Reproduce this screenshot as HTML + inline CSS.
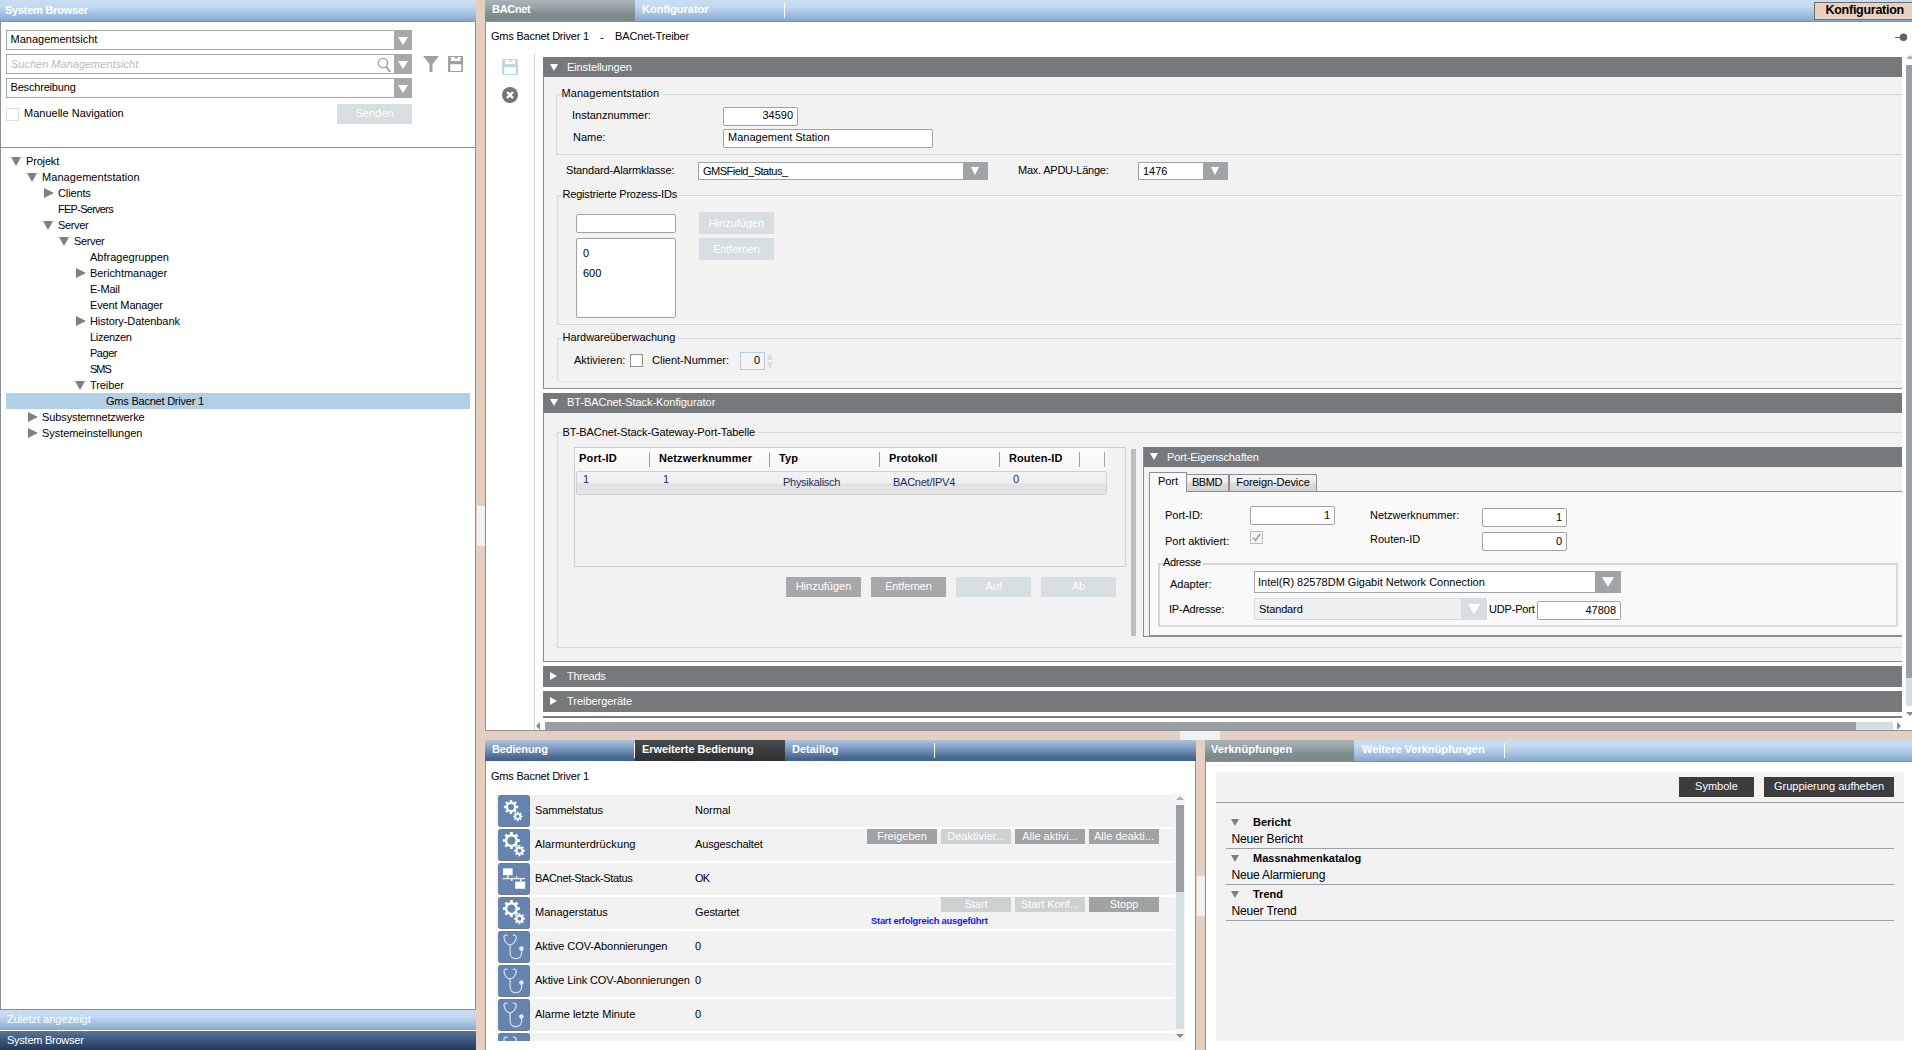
<!DOCTYPE html>
<html lang="de">
<head>
<meta charset="utf-8">
<title>System Browser - BACnet Konfigurator</title>
<style>
*{box-sizing:border-box;margin:0;padding:0}
html,body{width:1912px;height:1050px;overflow:hidden}
body{position:relative;background:#e5cfc0;font-family:"Liberation Sans",Arial,sans-serif;font-size:11px;color:#000;line-height:16px}
.a{position:absolute}
.t{position:absolute;white-space:nowrap;height:16px;line-height:16px}
.b{font-weight:bold}
.w{color:#fff}
.hb{background:linear-gradient(#c9ddf2 0%,#c4daf0 30%,#a3c1e2 68%,#86a7cd 100%)}
.hd{background:linear-gradient(#adc3dd 0%,#94aece 22%,#6e8db5 52%,#4b6b95 82%,#40608b 100%)}
.tabg{background:linear-gradient(#a8b4b8 0%,#98a4a7 35%,#808d8e 65%,#7b8889 100%)}
.tabd{background:linear-gradient(#4a4e50 0%,#3a3e40 50%,#2c3032 100%)}
.sec{position:absolute;background:#75797c;height:20px;color:#fff}
.sec>span{position:absolute;left:24px;top:1px;line-height:16px;white-space:nowrap}
.tri-d{position:absolute;width:0;height:0;border-left:4.2px solid transparent;border-right:4.2px solid transparent;border-top:7.5px solid #fff;margin-top:-1px;margin-left:0.5px}
.tri-r{position:absolute;width:0;height:0;border-top:4px solid transparent;border-bottom:4px solid transparent;border-left:7px solid #fff}
.inp{position:absolute;background:#fff;border:1px solid #a3a3a3;border-radius:2px;height:19px;line-height:17px;white-space:nowrap;padding:0 4px}
.r{text-align:right}
.dd{position:absolute;background:#fff;border:1px solid #a3a3a3;line-height:16px;white-space:nowrap;padding:0 4px}
.dd i{position:absolute;right:-1px;top:-1px;bottom:-1px;background:#9fa4a7;display:block}
.dd i:after{content:"";position:absolute;left:50%;top:50%;margin:-3px 0 0 -5px;border-left:5px solid transparent;border-right:5px solid transparent;border-top:8px solid #fff}
.dd.s i:after{margin:-4px 0 0 -4.5px;border-left-width:4.5px;border-right-width:4.5px}
.dd.l i:after{margin:-5px 0 0 -6px;border-left-width:6px;border-right-width:6px;border-top-width:10px}
.btn{position:absolute;background:#a6a8a9;color:#fff;text-align:center;white-space:nowrap;overflow:hidden}
.dis{background:#d6dee1;color:#fff}
.dk{background:#3c3c3c}
.gl{position:absolute;background:#d9d9d9}
.gt{position:absolute;white-space:nowrap;line-height:16px;height:16px;background:#f2f2f2;padding:0 3px 0 0.5px;margin-left:5px}
.tr{position:absolute;left:0;width:470px;height:16px;line-height:16px;white-space:nowrap}
.tr u{position:absolute;top:4px;width:0;height:0;text-decoration:none}
.tr u.d{border-left:5.5px solid transparent;border-right:5.5px solid transparent;border-top:9px solid #808080;margin-left:1px}
.tr u.e{border-top:5.5px solid transparent;border-bottom:5.5px solid transparent;border-left:10px solid #808080;top:3px;margin-left:0.5px}
.row{position:absolute;left:497px;width:677px;height:32px;background:#f2f2f2}
.ic{position:absolute;left:1px;top:0;width:32px;height:32px;background:#6585b0;border-radius:3px;border:1px solid #747880;border-left-color:#6a83a6}
.ic svg{position:absolute;left:-1px;top:-1px}
.row .l{position:absolute;left:38px;top:7px;line-height:16px;white-space:nowrap}
.row .v{position:absolute;left:198px;top:7px;line-height:16px;white-space:nowrap}
.sb{position:absolute;height:15px;line-height:15px;width:70px;font-size:11px;background:#9fa3a4}
.sb.dis{background:#ccd1d2}
.col{position:absolute;top:2px;font-weight:bold;line-height:16px;white-space:nowrap}
.cs{position:absolute;top:4px;width:1px;height:15px;background:#a0a0a0}
.cell{position:absolute;color:#1c2b6b;line-height:16px;white-space:nowrap}
</style>
</head>
<body>
<!-- LEFT: System Browser -->
<div class="a hb" style="left:0;top:0;width:476px;height:21px"></div>
<div class="a" style="left:0;top:21px;width:476px;height:1px;background:#8a8e96"></div>
<div class="t b w" style="left:5px;top:2px;font-size:11px"><span class="k" style="letter-spacing:-0.25px">System Browser</span></div>
<div class="a" style="left:0;top:22px;width:476px;height:988px;background:#fff;border-left:1px solid #8a8e96;border-right:1px solid #8a8e96;border-bottom:1px solid #8a8e96"></div>
<div class="dd" style="left:6px;top:30px;width:406px;height:20px;padding-left:3.5px">Managementsicht<i style="width:18px;background:#a9a9a9"></i></div>
<div class="dd" style="left:6px;top:54px;width:406px;height:20px;padding-top:1px;color:#b9b9b9;font-style:italic">Suchen Managementsicht<i style="width:18px;background:#a9a9a9"></i>
<svg class="a" style="left:369px;top:1px" width="16" height="16" viewBox="0 0 16 16"><circle cx="7" cy="7" r="4.6" fill="none" stroke="#a0a0a0" stroke-width="1.4"/><path d="M10 10.6 L14.4 16" stroke="#a0a0a0" stroke-width="1.9" fill="none"/></svg>
</div>
<div class="dd" style="left:6px;top:78px;width:406px;height:20px;padding-left:3.5px"><span class="k" style="letter-spacing:-0.183px">Beschreibung</span><i style="width:18px;background:#a9a9a9"></i></div>
<svg class="a" style="left:423px;top:56px" width="16" height="16" viewBox="0 0 16 16"><path d="M0 0 H16 L9.5 8 V16 H6.5 V8 Z" fill="#a0a0a0"/></svg>
<svg class="a" style="left:447.5px;top:56px" width="15.5" height="16" preserveAspectRatio="none" viewBox="0 0 16 16"><path d="M0 0 H16 V16 H0 Z M3 1 V5 H13 V1 H9.8 V2.6 H7 V1 Z M2.3 8.3 V15 H13.7 V8.3 Z" fill="#a0a0a0" fill-rule="evenodd"/></svg>
<div class="a" style="left:6px;top:108px;width:13px;height:13px;background:#fff;border:1px solid #d9dde6"></div>
<div class="t" style="left:24px;top:105px">Manuelle Navigation</div>
<div class="btn dis" style="left:337px;top:104px;width:75px;height:20px;line-height:19px">Senden</div>
<div class="a" style="left:1px;top:147px;width:474px;height:1px;background:#8a8e96"></div>
<div class="tr" style="top:153px"><u class="d" style="left:10px"></u><span class="a" style="left:26px"><span class="k" style="letter-spacing:-0.171px">Projekt</span></span></div>
<div class="tr" style="top:169px"><u class="d" style="left:26px"></u><span class="a" style="left:42px"><span class="k" style="letter-spacing:0.065px">Managementstation</span></span></div>
<div class="tr" style="top:185px"><u class="e" style="left:43px"></u><span class="a" style="left:58px"><span class="k" style="letter-spacing:-0.129px">Clients</span></span></div>
<div class="tr" style="top:201px"><span class="a" style="left:58px"><span class="k" style="letter-spacing:-0.727px">FEP-Servers</span></span></div>
<div class="tr" style="top:217px"><u class="d" style="left:42px"></u><span class="a" style="left:58px"><span class="k" style="letter-spacing:-0.333px">Server</span></span></div>
<div class="tr" style="top:233px"><u class="d" style="left:58px"></u><span class="a" style="left:74px"><span class="k" style="letter-spacing:-0.333px">Server</span></span></div>
<div class="tr" style="top:249px"><span class="a" style="left:90px">Abfragegruppen</span></div>
<div class="tr" style="top:265px"><u class="e" style="left:75px"></u><span class="a" style="left:90px"><span class="k" style="letter-spacing:-0.043px">Berichtmanager</span></span></div>
<div class="tr" style="top:281px"><span class="a" style="left:90px"><span class="k" style="letter-spacing:-0.25px">E-Mail</span></span></div>
<div class="tr" style="top:297px"><span class="a" style="left:90px"><span class="k" style="letter-spacing:-0.138px">Event Manager</span></span></div>
<div class="tr" style="top:313px"><u class="e" style="left:75px"></u><span class="a" style="left:90px"><span class="k" style="letter-spacing:-0.071px">History-Datenbank</span></span></div>
<div class="tr" style="top:329px"><span class="a" style="left:90px"><span class="k" style="letter-spacing:-0.3px">Lizenzen</span></span></div>
<div class="tr" style="top:345px"><span class="a" style="left:90px"><span class="k" style="letter-spacing:-0.48px">Pager</span></span></div>
<div class="tr" style="top:361px"><span class="a" style="left:90px"><span class="k" style="letter-spacing:-1.0px">SMS</span></span></div>
<div class="tr" style="top:377px"><u class="d" style="left:74px"></u><span class="a" style="left:90px"><span class="k" style="letter-spacing:-0.086px">Treiber</span></span></div>
<div class="tr" style="top:393px;left:6px;width:464px;background:#b2cfe6"><span class="a" style="left:100px"><span class="k" style="letter-spacing:-0.221px">Gms Bacnet Driver 1</span></span></div>
<div class="tr" style="top:409px"><u class="e" style="left:27px"></u><span class="a" style="left:42px"><span class="k" style="letter-spacing:-0.111px">Subsystemnetzwerke</span></span></div>
<div class="tr" style="top:425px"><u class="e" style="left:27px"></u><span class="a" style="left:42px"><span class="k" style="letter-spacing:-0.063px">Systemeinstellungen</span></span></div>
<div class="a hb" style="left:0;top:1010px;width:476px;height:20px"></div>
<div class="t w" style="left:7px;top:1011px">Zuletzt angezeigt</div>
<div class="a" style="left:0;top:1030px;width:476px;height:1px;background:#fff"></div>
<div class="a" style="left:0;top:1031px;width:476px;height:19px;background:linear-gradient(#5b7599 0%,#3f5b82 40%,#22395a 100%)"></div>
<div class="t w" style="left:7px;top:1032px"><span class="k" style="letter-spacing:-0.25px">System Browser</span></div>
<!-- splitter grips -->
<div class="a" style="left:477px;top:506px;width:8px;height:40px;background:#f2f2f2"></div>
<!-- TOP RIGHT: BACnet Konfigurator -->
<div class="a" style="left:485px;top:0;width:1427px;height:730px;background:#fff;border-left:1px solid #8a8e96"></div>
<div class="a hb" style="left:485px;top:0;width:1427px;height:21px"></div>
<div class="a" style="left:485px;top:21px;width:1427px;height:1px;background:#8a8e96"></div>
<div class="a tabg" style="left:485px;top:0;width:150px;height:21px"></div>
<div class="t b w" style="left:492px;top:1px"><span class="k" style="letter-spacing:-0.317px">BACnet</span></div>
<div class="t b w" style="left:642px;top:1px">Konfigurator</div>
<div class="a" style="left:784px;top:3px;width:1px;height:15px;background:#fff"></div>
<div class="a" style="left:1814px;top:2px;width:99px;height:18px;background:#e8d1c1;border:1px solid #6e6e6e"></div>
<div class="t b" style="left:1825.5px;top:2px;line-height:17px;font-size:12.5px"><span class="k" style="letter-spacing:-0.269px">Konfiguration</span></div>
<div class="t" style="left:491px;top:28px"><span class="k" style="letter-spacing:-0.221px">Gms Bacnet Driver 1</span></div>
<div class="t" style="left:600px;top:29px">-</div>
<div class="t" style="left:615px;top:28px"><span class="k" style="letter-spacing:-0.143px">BACnet-Treiber</span></div>
<svg class="a" style="left:1894px;top:32px" width="14" height="10" viewBox="0 0 14 10"><path d="M1 5.5 H6" stroke="#666" stroke-width="1"/><circle cx="9.5" cy="5.3" r="3.8" fill="#5f6366"/></svg>
<!-- toolbar -->
<div class="a" style="left:534px;top:53px;width:1px;height:677px;background:#d4d4d4"></div>
<svg class="a" style="left:502px;top:59px" width="16" height="16" viewBox="0 0 16 16"><path d="M0 0 H16 V16 H0 Z M3 1 V5 H13 V1 H9.8 V2.6 H7 V1 Z M2.3 8.3 V15 H13.7 V8.3 Z" fill="#bdd9e2" fill-rule="evenodd"/></svg>
<svg class="a" style="left:502px;top:87px" width="16" height="16" viewBox="0 0 16 16"><circle cx="8" cy="8" r="8" fill="#757575"/><path d="M5 5 L11 11 M11 5 L5 11" stroke="#fff" stroke-width="2.4"/></svg>
<!-- Section 1: Einstellungen -->
<div class="a" style="left:543px;top:77px;width:1359px;height:312px;background:#f2f2f2;border-left:1px solid #8a8d90;border-bottom:1px solid #8a8d90"></div>
<div class="sec" style="left:543px;top:57px;width:1359px"><div class="tri-d" style="left:6px;top:8px"></div><span style="top:2px"><span class="k" style="letter-spacing:-0.108px">Einstellungen</span></span></div>
<!-- group Managementstation -->
<div class="gl" style="left:556px;top:94px;width:1346px;height:1px"></div>
<div class="gl" style="left:556px;top:94px;width:1px;height:61px"></div>
<div class="gl" style="left:556px;top:154px;width:1346px;height:1px"></div>
<div class="gt" style="left:556px;top:85px"><span class="k" style="letter-spacing:0.065px">Managementstation</span></div>
<div class="t" style="left:572px;top:107px">Instanznummer:</div>
<div class="inp r" style="left:723px;top:107px;width:75px;line-height:15px">34590</div>
<div class="t" style="left:573px;top:129px">Name:</div>
<div class="inp" style="left:723px;top:129px;width:210px;line-height:15px">Management Station</div>
<div class="t" style="left:566px;top:162px"><span class="k" style="letter-spacing:-0.143px">Standard-Alarmklasse:</span></div>
<div class="dd s" style="left:698px;top:162px;width:290px;height:18px"><span class="k" style="letter-spacing:-0.487px">GMSField_Status_</span><i style="width:25px"></i></div>
<div class="t" style="left:1018px;top:162px"><span class="k" style="letter-spacing:-0.225px">Max. APDU-Länge:</span></div>
<div class="dd s" style="left:1138px;top:162px;width:90px;height:18px">1476<i style="width:25px"></i></div>
<!-- group Registrierte Prozess-IDs -->
<div class="gl" style="left:557px;top:195px;width:1345px;height:1px"></div>
<div class="gl" style="left:557px;top:195px;width:1px;height:130px"></div>
<div class="gl" style="left:557px;top:324px;width:1345px;height:1px"></div>
<div class="gt" style="left:557px;top:186px"><span class="k" style="letter-spacing:-0.196px">Registrierte Prozess-IDs</span></div>
<div class="inp" style="left:576px;top:214px;width:100px"></div>
<div class="inp" style="left:576px;top:238px;width:100px;height:80px"></div>
<div class="t" style="left:583px;top:245px">0</div>
<div class="t" style="left:583px;top:265px">600</div>
<div class="btn dis" style="left:699px;top:212px;width:75px;height:22px;line-height:22px">Hinzufügen</div>
<div class="btn dis" style="left:699px;top:238px;width:75px;height:22px;line-height:22px"><span class="k" style="letter-spacing:-0.111px">Entfernen</span></div>
<!-- group Hardwareüberwachung -->
<div class="gl" style="left:557px;top:338px;width:1345px;height:1px"></div>
<div class="gl" style="left:557px;top:338px;width:1px;height:44px"></div>
<div class="gl" style="left:557px;top:381px;width:1345px;height:1px;background:#e4e4e4"></div>
<div class="gt" style="left:557px;top:329px"><span class="k" style="letter-spacing:-0.053px">Hardwareüberwachung</span></div>
<div class="t" style="left:574px;top:352px">Aktivieren:</div>
<div class="a" style="left:630px;top:354px;width:13px;height:13px;background:#fff;border:1px solid #8f8f8f"></div>
<div class="t" style="left:652px;top:352px">Client-Nummer:</div>
<div class="a r" style="left:740px;top:352px;width:25px;height:18px;background:#f4f4f4;border:1px solid #b4cfe4;padding-right:4px;line-height:15px">0</div>
<div class="a" style="left:767px;top:353px;width:0;height:0;border-left:3.5px solid transparent;border-right:3.5px solid transparent;border-bottom:7.5px solid #d6dee1"></div>
<div class="a" style="left:767px;top:362px;width:0;height:0;border-left:3.5px solid transparent;border-right:3.5px solid transparent;border-top:7.5px solid #d6dee1"></div>
<!-- Section 2: BT-BACnet-Stack-Konfigurator -->
<div class="a" style="left:543px;top:413px;width:1359px;height:249px;background:#f2f2f2;border-left:1px solid #8a8d90;border-bottom:1px solid #8a8d90"></div>
<div class="sec" style="left:543px;top:393px;width:1359px"><div class="tri-d" style="left:6px;top:7px"></div><span><span class="k" style="letter-spacing:-0.054px">BT-BACnet-Stack-Konfigurator</span></span></div>
<div class="gl" style="left:557px;top:432px;width:1345px;height:1px"></div>
<div class="gl" style="left:557px;top:432px;width:1px;height:216px"></div>
<div class="gl" style="left:557px;top:647px;width:1345px;height:1px"></div>
<div class="gt" style="left:557px;top:424px"><span class="k" style="letter-spacing:-0.086px">BT-BACnet-Stack-Gateway-Port-Tabelle</span></div>
<!-- table -->
<div class="a" style="left:574px;top:447px;width:552px;height:120px;border:1px solid #d0d0d0;background:#f2f2f2">
 <div class="a" style="left:0;top:0;width:532px;height:23px;background:linear-gradient(#fdfdfd,#f6f6f6)"></div>
 <div class="col" style="left:4px"><span class="k" style="letter-spacing:0.171px">Port-ID</span></div><div class="cs" style="left:74px"></div>
 <div class="col" style="left:84px"><span class="k" style="letter-spacing:0.107px">Netzwerknummer</span></div><div class="cs" style="left:194px"></div>
 <div class="col" style="left:204px"><span class="k" style="letter-spacing:0.167px">Typ</span></div><div class="cs" style="left:304px"></div>
 <div class="col" style="left:314px"><span class="k" style="letter-spacing:0.067px">Protokoll</span></div><div class="cs" style="left:424px"></div>
 <div class="col" style="left:434px"><span class="k" style="letter-spacing:0.1px">Routen-ID</span></div><div class="cs" style="left:504px"></div><div class="cs" style="left:529px"></div>
 <div class="a" style="left:1px;top:23px;width:531px;height:24px;border:1px solid #cfcfcf;border-radius:2px;background:linear-gradient(#f3f3f3 0%,#eeeeee 50%,#e2e2e2 55%,#e6e6e6 100%)"></div>
 <div class="cell" style="left:8px;top:23px">1</div>
 <div class="cell" style="left:88px;top:23px">1</div>
 <div class="cell" style="left:208px;top:26px"><span class="k" style="letter-spacing:-0.283px">Physikalisch</span></div>
 <div class="cell" style="left:318px;top:26px"><span class="k" style="letter-spacing:-0.255px">BACnet/IPV4</span></div>
 <div class="cell" style="left:438px;top:23px">0</div>
</div>
<div class="btn" style="left:786px;top:577px;width:75px;height:20px;line-height:19px">Hinzufügen</div>
<div class="btn" style="left:871px;top:577px;width:75px;height:20px;line-height:19px"><span class="k" style="letter-spacing:-0.111px">Entfernen</span></div>
<div class="btn dis" style="left:956px;top:577px;width:75px;height:20px;line-height:19px">Auf</div>
<div class="btn dis" style="left:1041px;top:577px;width:75px;height:20px;line-height:19px">Ab</div>
<div class="a" style="left:1131px;top:449px;width:5px;height:187px;background:#bebebe"></div>
<!-- Port-Eigenschaften -->
<div class="a" style="left:1143px;top:447px;width:759px;height:190px;background:#f2f2f2;border-left:1px solid #8a8d90;border-bottom:1px solid #8a8d90"></div>
<div class="sec" style="left:1144px;top:447px;width:758px;height:20px"><div class="tri-d" style="left:5px;top:7px"></div><span style="left:23px;top:2px"><span class="k" style="letter-spacing:-0.094px">Port-Eigenschaften</span></span></div>
<div class="a" style="left:1149px;top:491px;width:753px;height:145px;background:#f9f9f9;border:1px solid #8c8e91;border-right:none"></div>
<div class="a" style="left:1186px;top:474px;width:43px;height:18px;padding-right:1px;border:1px solid #8c8e91;background:linear-gradient(#f5f5f5 0%,#ededed 45%,#dcdcdc 55%,#d2d2d2 100%);text-align:center;line-height:15px"><span class="k" style="letter-spacing:-0.4px">BBMD</span></div>
<div class="a" style="left:1229px;top:474px;width:88px;height:18px;border:1px solid #8c8e91;background:linear-gradient(#f5f5f5 0%,#ededed 45%,#dcdcdc 55%,#d2d2d2 100%);text-align:center;line-height:15px"><span class="k" style="letter-spacing:-0.086px">Foreign-Device</span></div>
<div class="a" style="left:1149px;top:472px;width:38px;height:20px;border:1px solid #8c8e91;border-bottom:none;background:#f9f9f9;text-align:center;line-height:17px">Port</div>
<div class="t" style="left:1165px;top:507px">Port-ID:</div>
<div class="inp r" style="left:1250px;top:506px;width:85px">1</div>
<div class="t" style="left:1370px;top:507px">Netzwerknummer:</div>
<div class="inp r" style="left:1482px;top:508px;width:85px">1</div>
<div class="t" style="left:1165px;top:533px">Port aktiviert:</div>
<div class="a" style="left:1250px;top:531px;width:13px;height:13px;background:#f4f4f4;border:1px solid #bcbcbc"></div>
<svg class="a" style="left:1250px;top:531px" width="13" height="13" viewBox="0 0 13 13"><path d="M3 6.5 L5.5 9.5 L10 3" stroke="#a0a0a0" stroke-width="1.6" fill="none"/></svg>
<div class="t" style="left:1370px;top:531px">Routen-ID </div>
<div class="inp r" style="left:1482px;top:532px;width:85px">0</div>
<!-- Adresse group -->
<div class="a" style="left:1158px;top:563px;width:740px;height:64px;border:2px solid #dcdcdc;border-top-color:#d6d6d6;border-left-color:#d6d6d6"></div>
<div class="gt" style="left:1158px;top:554px;padding:0 2px 0 0;background:#f9f9f9"><span class="k" style="letter-spacing:-0.357px">Adresse</span></div>
<div class="t" style="left:1170px;top:576px">Adapter:</div>
<div class="dd l" style="left:1254px;top:571px;width:367px;height:22px;padding-top:2px;padding-left:3px">Intel(R) 82578DM Gigabit Network Connection<i style="width:26px"></i></div>
<div class="t" style="left:1169px;top:601px"><span class="k" style="letter-spacing:-0.227px">IP-Adresse:</span></div>
<div class="dd l" style="left:1254px;top:598px;width:233px;height:22px;padding-top:2px;background:#eef0f1;border-color:#d6dee1"><span class="k" style="letter-spacing:-0.125px">Standard</span><i style="width:26px;background:#d6dee1"></i></div>
<div class="t" style="left:1489px;top:601px"><span class="k" style="letter-spacing:-0.188px">UDP-Port</span></div>
<div class="inp r" style="left:1537px;top:601px;width:84px">47808</div>
<!-- Sections 3,4 -->
<div class="sec" style="left:543px;top:666px;width:1359px;height:21px"><div class="tri-r" style="left:7px;top:6px"></div><span style="top:2px"><span class="k" style="letter-spacing:-0.257px">Threads</span></span></div>
<div class="sec" style="left:543px;top:691px;width:1359px;height:21px"><div class="tri-r" style="left:7px;top:6px"></div><span style="top:2px"><span class="k" style="letter-spacing:-0.038px">Treibergeräte</span></span></div>
<div class="a" style="left:543px;top:716px;width:1359px;height:2px;background:#7b7e81"></div>
<!-- scrollbars -->
<div class="a" style="left:1906px;top:65px;width:6px;height:613px;background:#9a9fa3"></div>
<div class="a" style="left:1906px;top:678px;width:6px;height:28px;background:#d6dee1"></div>
<div class="a" style="left:1906px;top:55px;width:0;height:0;border-left:4px solid transparent;border-right:4px solid transparent;border-bottom:4px solid #b0b4b6"></div>
<div class="a" style="left:1906px;top:712px;width:0;height:0;border-left:4px solid transparent;border-right:4px solid transparent;border-top:4px solid #8a8d90"></div>
<div class="a" style="left:545px;top:722px;width:1311px;height:8px;background:#9a9fa3"></div>
<div class="a" style="left:1856px;top:722px;width:37px;height:8px;background:#d6dee1"></div>
<div class="a" style="left:536px;top:722px;width:0;height:0;border-top:4px solid transparent;border-bottom:4px solid transparent;border-right:4px solid #8a8d90"></div>
<div class="a" style="left:1897px;top:722px;width:0;height:0;border-top:4px solid transparent;border-bottom:4px solid transparent;border-left:4px solid #8a8d90"></div>
<div class="a" style="left:485px;top:730px;width:1427px;height:1px;background:#8e9297"></div>
<div class="a" style="left:1180px;top:731px;width:40px;height:9px;background:#f2f2f2"></div>
<!-- BOTTOM LEFT: Bedienung -->
<div class="a" style="left:485px;top:740px;width:711px;height:310px;background:#fff;border-left:1px solid #8a8e96;border-right:1px solid #8a8e96"></div>
<div class="a hd" style="left:485px;top:740px;width:711px;height:21px"></div>
<div class="a tabd" style="left:635px;top:740px;width:150px;height:21px"></div>
<div class="a" style="left:634px;top:743px;width:1px;height:15px;background:#fff"></div>
<div class="a" style="left:934px;top:743px;width:1px;height:15px;background:#fff"></div>
<div class="t b w" style="left:492px;top:741px"><span class="k" style="letter-spacing:-0.122px">Bedienung</span></div>
<div class="t b w" style="left:642px;top:741px"><span class="k" style="letter-spacing:-0.075px">Erweiterte Bedienung</span></div>
<div class="t b w" style="left:792px;top:741px">Detaillog</div>
<div class="t" style="left:491px;top:768px"><span class="k" style="letter-spacing:-0.221px">Gms Bacnet Driver 1</span></div>
<div class="a" style="left:497px;top:793px;width:688px;height:248px;background:#f4f4f4"></div>
<div class="a" style="left:497px;top:793px;width:677px;height:248px;background:#fff"></div>
<div class="a" style="left:496px;top:793px;width:1px;height:248px;background:#f4f4f4"></div>
<div class="row" style="top:795px"><div class="ic"><svg width="32" height="32" viewBox="0 0 32 32"><use href="#gears"/></svg></div><span class="l"><span class="k" style="letter-spacing:-0.158px">Sammelstatus</span></span><span class="v">Normal</span></div>
<div class="row" style="top:829px"><div class="ic"><svg width="32" height="32" viewBox="0 0 32 32"><use href="#gearl"/></svg></div><span class="l"><span class="k" style="letter-spacing:0.083px">Alarmunterdrückung</span></span><span class="v"><span class="k" style="letter-spacing:-0.115px">Ausgeschaltet</span></span></div>
<div class="row" style="top:863px"><div class="ic"><svg width="32" height="32" viewBox="0 0 32 32"><use href="#net"/></svg></div><span class="l"><span class="k" style="letter-spacing:-0.337px">BACnet-Stack-Status</span></span><span class="v"><span class="k" style="letter-spacing:-0.75px">OK</span></span></div>
<div class="row" style="top:897px"><div class="ic"><svg width="32" height="32" viewBox="0 0 32 32"><use href="#gearl"/></svg></div><span class="l">Managerstatus</span><span class="v"><span class="k" style="letter-spacing:-0.111px">Gestartet</span></span></div>
<div class="row" style="top:931px"><div class="ic"><svg width="32" height="32" viewBox="0 0 32 32"><use href="#steth"/></svg></div><span class="l"><span class="k" style="letter-spacing:-0.096px">Aktive COV-Abonnierungen</span></span><span class="v">0</span></div>
<div class="row" style="top:965px"><div class="ic"><svg width="32" height="32" viewBox="0 0 32 32"><use href="#steth"/></svg></div><span class="l"><span class="k" style="letter-spacing:-0.103px">Aktive Link COV-Abonnierungen</span></span><span class="v">0</span></div>
<div class="row" style="top:999px"><div class="ic"><svg width="32" height="32" viewBox="0 0 32 32"><use href="#steth"/></svg></div><span class="l">Alarme letzte Minute</span><span class="v">0</span></div>
<div class="row" style="top:1033px;height:8px;overflow:hidden"><div class="ic"><svg width="32" height="32" viewBox="0 0 32 32"><use href="#steth"/></svg></div></div>
<div class="btn sb" style="left:867px;top:829px">Freigeben</div>
<div class="btn sb dis" style="left:941px;top:829px">Deaktivier...</div>
<div class="btn sb" style="left:1015px;top:829px">Alle aktivi...</div>
<div class="btn sb" style="left:1089px;top:829px">Alle deakti...</div>
<div class="btn sb dis" style="left:941px;top:897px">Start</div>
<div class="btn sb dis" style="left:1015px;top:897px">Start Konf...</div>
<div class="btn sb" style="left:1089px;top:897px">Stopp</div>
<div class="t" style="left:871px;top:913px;font-size:9.3px;font-weight:bold;letter-spacing:-0.21px;color:#1414f5">Start erfolgreich ausgeführt</div>
<div class="a" style="left:1176px;top:805px;width:8px;height:224px;background:#d6dee1"></div>
<div class="a" style="left:1176px;top:805px;width:8px;height:87px;background:#9a9fa3"></div>
<div class="a" style="left:1176px;top:796px;width:0;height:0;border-left:4px solid transparent;border-right:4px solid transparent;border-bottom:4px solid #b0b4b6"></div>
<div class="a" style="left:1176px;top:1034px;width:0;height:0;border-left:4px solid transparent;border-right:4px solid transparent;border-top:4px solid #8a8d90"></div>
<div class="a" style="left:1197px;top:876px;width:8px;height:40px;background:#f2f2f2"></div>
<!-- BOTTOM RIGHT: Verknüpfungen -->
<div class="a" style="left:1205px;top:740px;width:707px;height:310px;background:#fff;border-left:1px solid #8a8e96"></div>
<div class="a hb" style="left:1205px;top:740px;width:707px;height:21px"></div>
<div class="a" style="left:1205px;top:761px;width:707px;height:1px;background:#8a8e96"></div>
<div class="a tabg" style="left:1205px;top:740px;width:149px;height:21px"></div>
<div class="a" style="left:1504px;top:743px;width:1px;height:15px;background:#fff"></div>
<div class="t b w" style="left:1211px;top:741px"><span class="k" style="letter-spacing:0.092px">Verknüpfungen</span></div>
<div class="t b w" style="left:1362px;top:741px">Weitere Verknüpfungen</div>
<div class="a" style="left:1216px;top:772px;width:688px;height:269px;background:#f2f2f2"></div>
<div class="btn dk" style="left:1679px;top:777px;width:75px;height:20px;line-height:19px">Symbole</div>
<div class="btn dk" style="left:1764px;top:777px;width:130px;height:20px;line-height:19px">Gruppierung aufheben</div>
<div class="a" style="left:1216px;top:802px;width:688px;height:1px;background:#9aa3a3"></div>
<div class="a" style="left:1231px;top:819px;width:0;height:0;border-left:4.5px solid transparent;border-right:4.5px solid transparent;border-top:7px solid #808080"></div>
<div class="t b" style="left:1253px;top:814px">Bericht</div>
<div class="t" style="left:1231.5px;top:831px;font-size:12px;letter-spacing:-0.15px">Neuer Bericht</div>
<div class="a" style="left:1226px;top:848px;width:668px;height:1px;background:#9aa3a3"></div>
<div class="a" style="left:1231px;top:855px;width:0;height:0;border-left:4.5px solid transparent;border-right:4.5px solid transparent;border-top:7px solid #808080"></div>
<div class="t b" style="left:1253px;top:850px">Massnahmenkatalog</div>
<div class="t" style="left:1231.5px;top:867px;font-size:12px;letter-spacing:-0.15px">Neue Alarmierung</div>
<div class="a" style="left:1226px;top:884px;width:668px;height:1px;background:#9aa3a3"></div>
<div class="a" style="left:1231px;top:891px;width:0;height:0;border-left:4.5px solid transparent;border-right:4.5px solid transparent;border-top:7px solid #808080"></div>
<div class="t b" style="left:1253px;top:886px">Trend</div>
<div class="t" style="left:1231.5px;top:903px;font-size:12px;letter-spacing:-0.15px">Neuer Trend</div>
<div class="a" style="left:1226px;top:920px;width:668px;height:1px;background:#9aa3a3"></div>
<!-- icon defs -->
<svg width="0" height="0" style="position:absolute">
<defs>
<path id="gears" fill="#fff" fill-rule="evenodd" d="M18.17 10.81 L20.11 10.87 L20.11 13.13 L18.17 13.19 L17.49 14.81 L18.82 16.23 L17.23 17.82 L15.81 16.49 L14.19 17.17 L14.13 19.11 L11.87 19.11 L11.81 17.17 L10.19 16.49 L8.77 17.82 L7.18 16.23 L8.51 14.81 L7.83 13.19 L5.89 13.13 L5.89 10.87 L7.83 10.81 L8.51 9.19 L7.18 7.77 L8.77 6.18 L10.19 7.51 L11.81 6.83 L11.87 4.89 L14.13 4.89 L14.19 6.83 L15.81 7.51 L17.23 6.18 L18.82 7.77 L17.49 9.19 Z M9.90 12.00 a3.10 3.10 0 1 0 6.20 0 a3.10 3.10 0 1 0 -6.20 0 Z M23.21 20.62 L24.54 20.65 L24.54 22.15 L23.21 22.18 L22.77 23.26 L23.68 24.22 L22.62 25.28 L21.66 24.37 L20.58 24.81 L20.55 26.14 L19.05 26.14 L19.02 24.81 L17.94 24.37 L16.98 25.28 L15.92 24.22 L16.83 23.26 L16.39 22.18 L15.06 22.15 L15.06 20.65 L16.39 20.62 L16.83 19.54 L15.92 18.58 L16.98 17.52 L17.94 18.43 L19.02 17.99 L19.05 16.66 L20.55 16.66 L20.58 17.99 L21.66 18.43 L22.62 17.52 L23.68 18.58 L22.77 19.54 Z M18.10 21.40 a1.70 1.70 0 1 0 3.40 0 a1.70 1.70 0 1 0 -3.40 0 Z"/>
<path id="gearl" fill="#fff" fill-rule="evenodd" d="M19.73 10.14 L21.89 10.25 L21.89 12.95 L19.73 13.06 L18.91 15.05 L20.36 16.65 L18.45 18.56 L16.85 17.11 L14.86 17.93 L14.75 20.09 L12.05 20.09 L11.94 17.93 L9.95 17.11 L8.35 18.56 L6.44 16.65 L7.89 15.05 L7.07 13.06 L4.91 12.95 L4.91 10.25 L7.07 10.14 L7.89 8.15 L6.44 6.55 L8.35 4.64 L9.95 6.09 L11.94 5.27 L12.05 3.11 L14.75 3.11 L14.86 5.27 L16.85 6.09 L18.45 4.64 L20.36 6.55 L18.91 8.15 Z M9.20 11.60 a4.20 4.20 0 1 0 8.40 0 a4.20 4.20 0 1 0 -8.40 0 Z M25.50 20.78 L27.03 20.82 L27.03 22.58 L25.50 22.62 L24.97 23.88 L26.03 24.99 L24.79 26.23 L23.68 25.17 L22.42 25.70 L22.38 27.23 L20.62 27.23 L20.58 25.70 L19.32 25.17 L18.21 26.23 L16.97 24.99 L18.03 23.88 L17.50 22.62 L15.97 22.58 L15.97 20.82 L17.50 20.78 L18.03 19.52 L16.97 18.41 L18.21 17.17 L19.32 18.23 L20.58 17.70 L20.62 16.17 L22.38 16.17 L22.42 17.70 L23.68 18.23 L24.79 17.17 L26.03 18.41 L24.97 19.52 Z M19.50 21.70 a2.00 2.00 0 1 0 4.00 0 a2.00 2.00 0 1 0 -4.00 0 Z"/>
<g id="net" fill="#fff"><rect x="5" y="5.4" width="9.6" height="6.8"/><rect x="9.2" y="12" width="1.3" height="3"/><rect x="4.6" y="14.9" width="22.6" height="1.4" opacity="0.8"/><rect x="13.2" y="16" width="1.2" height="2"/><rect x="18" y="13" width="1.2" height="2"/><rect x="22.2" y="16" width="1.3" height="3"/><rect x="17.2" y="18.6" width="10" height="7.2"/></g>
<g id="steth" fill="none" stroke="#d6dfec" stroke-width="1.25" stroke-linecap="round"><path d="M9 4.2 C6.6 3.8 5.6 5 6.2 7.6 C7 11 9 13.4 12.1 14 C15.2 13.4 17.2 11 18 7.6 C18.6 5 17.6 3.8 15.3 4.2"/><path d="M12.1 14 V21.8 C12.1 29.6 23.6 29.6 23.6 21.8 V19.5"/><circle cx="23.4" cy="17.6" r="2.3" fill="#e6ebf3" stroke="none"/></g>
</defs>
</svg>
</body>
</html>
